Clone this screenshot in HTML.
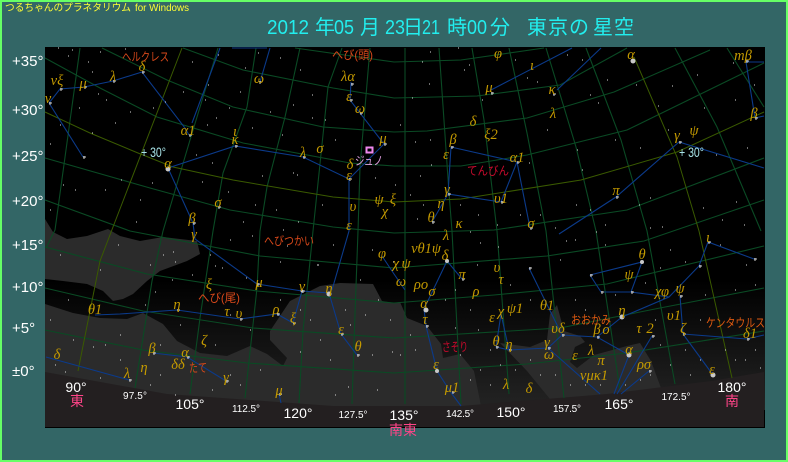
<!DOCTYPE html>
<html lang="ja"><head><meta charset="utf-8"><title>つるちゃんのプラネタリウム</title>
<style>
html,body{margin:0;padding:0;background:#336666;width:788px;height:462px;overflow:hidden}
svg{display:block}
text{font-family:"Liberation Sans","WenQuanYi Zen Hei","Noto Sans CJK JP",sans-serif}
.g text{font-family:"Liberation Serif","DejaVu Serif",serif;font-style:italic;font-size:14.5px;fill:#c49a00;text-anchor:middle}
.n text{font-size:12px;text-anchor:start}
.d text{font-size:15px;fill:#fff}
.az text{fill:#fff;text-anchor:middle}
</style></head><body>
<svg width="788" height="462" viewBox="0 0 788 462" xmlns="http://www.w3.org/2000/svg">
<defs><linearGradient id="sky" x1="0" y1="0" x2="0" y2="1"><stop offset="0" stop-color="#000"/><stop offset=".5" stop-color="#000"/><stop offset="1" stop-color="#242424"/></linearGradient></defs>
<rect width="788" height="462" fill="#336666"/>
<rect x="1" y="1" width="786" height="460" fill="none" stroke="#66ff66" stroke-width="2"/>
<rect x="45" y="47" width="720" height="381" fill="#000"/>
<rect x="45" y="150" width="720" height="260" fill="url(#sky)"/>
<g fill="#2b2b2b">
<polygon points="45,219 53,232 67,239 87,236 108,229 120,236 140,241 163,237 197,241 200,254 187,261 160,271 147,281 133,294 123,299 113,301 103,291 87,284 63,281 45,279"/>
<polygon points="45,304 73,313 100,318 127,319 143,313 163,324 177,341 200,353 227,356 250,346 267,354 283,366 287,358 270,340 270,331 290,301 320,286 340,283 373,284 382,301 394,303 400,302 407,318 427,326 441,344 443,358 460,354 474,371 481,406 45,406"/>
<polygon points="500,343 530,347 547,340 550,314 557,305 564,331 580,336 585,342 575,347 570,362 577,368 594,355 627,346 640,343 651,361 661,388 610,396 554,404 527,371"/>
</g>
<polygon points="45,372 167,394 333,406 461,406 607,394 711,381 764,372 764,427 45,427" fill="#231f20"/>
<g fill="none" stroke="#0a4a24" stroke-width="1.1">
<polyline points="295,48 394,62 461,60 544,48"/>
<polyline points="183,48 243,70 333,88 394,98 477,96 560,85 627,48"/>
<polyline points="102,48 167,80 233,107 323,127 394,132 427,131 527,118 614,92 710,50"/>
<polyline points="45,58 100,88 157,117 243,143 350,163 394,166 461,166 527,155 627,130 764,63"/>
<polyline points="45,158 150,188 230,210 333,227 394,233 494,230 627,210 764,158"/>
<polyline points="45,200 130,231 260,256 394,268 547,256 644,241 764,200"/>
<polyline points="45,247 147,274 257,291 394,303 494,295 607,284 764,246"/>
<polyline points="45,288 143,311 253,328 394,338 560,328 660,308 764,288"/>
<polyline points="45,330 143,350 247,363 394,373 527,364 627,353 764,331"/>
<polyline points="80,48 55,230 46,248"/>
<polyline points="218,48 190,140 163,231 152,281 135,388"/>
<polyline points="256,48 247,107 223,173 213,231 200,318 190,394"/>
<polyline points="300,48 285,117 267,187 260,231 257,288 245,398"/>
<polyline points="342,48 328,87 313,231 303,331 299,403"/>
<polyline points="370,48 360,167 358,231 355,314 352,404"/>
<polyline points="405,48 405,404"/>
<polyline points="439,48 449,193 452,231 461,404"/>
<polyline points="472,48 484,120 497,231 509,394"/>
<polyline points="509,48 527,133 546,231 564,398"/>
<polyline points="546,48 576,147 596,231 620,390"/>
<polyline points="586,48 621,140 647,231 675,384"/>
<polyline points="675,48 717,127 761,231"/>
<polyline points="727,48 764,107"/>
</g>
<g fill="none" stroke="#3a5a00" stroke-width="1">
<polyline points="45,112 90,133 138,153 173,167 233,180 333,197 394,202 461,199 581,180 677,152 764,112"/>
<polyline points="182,48 113,227 100,261 78,371"/>
<polyline points="634,57 677,157 699,231 732,378"/>
</g>
<g fill="none" stroke="#0b3a8a" stroke-width="1.1">
<polyline points="49,103 60,89 84,87 113,81 142,72 185,128 189,135"/>
<polyline points="49,103 83,157"/>
<polyline points="168,168 235,146 303,157 349,179 384,144 360,113 350,100 351,82"/>
<polyline points="349,179 349,231 332,290"/>
<polyline points="168,168 193,223 195,239 257,284 302,291 329,293 341,334 357,355"/>
<polyline points="302,291 293,323 277,314 240,319 177,310 120,314 95,315"/>
<polyline points="220,48 192,123"/><polyline points="270,48 260,82"/><polyline points="232,48 267,48"/>
<polyline points="46,357 129,380"/><polyline points="153,353 187,357 226,381"/><polyline points="279,394 281,403"/>
<polyline points="382,256 394,274 405,290"/>
<polyline points="451,147 517,162 501,202 448,194 451,147"/>
<polyline points="448,194 432,222"/><polyline points="517,162 530,228"/>
<polyline points="491,90 572,48"/><polyline points="557,90 601,48"/>
<polyline points="559,234 616,197 679,142 764,168"/>
<polyline points="746,62 764,62"/><polyline points="746,62 755,118 764,116"/>
<polyline points="447,261 424,309 426,326 437,371 452,394 461,406"/>
<polyline points="447,261 462,279"/>
<polyline points="529,268 562,335 597,337 629,355 614,394"/>
<polyline points="597,337 622,317 669,297 699,266 708,242 754,259"/>
<polyline points="590,275 642,262 631,292 601,292 590,275"/>
<polyline points="631,292 669,297"/>
<polyline points="680,296 683,334 747,339 764,335"/><polyline points="683,334 713,375"/>
<polyline points="652,336 617,394"/><polyline points="649,371 621,394"/>
<polyline points="562,335 548,348 509,350 496,347 501,314 509,350"/>
<polyline points="548,348 600,394"/>
</g>
<path fill="none" stroke="#d8d8d8" stroke-width="1" shape-rendering="crispEdges" d="M58 48h1M72 50h1M88 62h1M68 56h1M100 52h1M125 49h1M92 72h1M98 94h1M79 108h1M106 100h1M60 125h1M50 144h1M92 133h1M115 123h1M130 112h1M153 108h1M165 102h1M183 92h1M205 100h1M207 125h1M216 118h1M229 108h1M240 92h1M208 85h1M192 62h1M218 55h1M245 68h1M258 53h1M280 58h1M300 70h1M312 95h1M293 105h1M270 112h1M252 128h1M282 135h1M312 118h1M325 120h1M335 140h1M297 175h1M293 173h1M262 176h1M228 192h1M255 205h1M276 210h1M136 222h1M75 190h1M63 185h1M50 210h1M105 190h1M121 180h1M140 200h1M152 183h1M196 155h1M212 163h1M202 182h1M243 222h1M283 230h1M298 222h1M322 205h1M375 178h1M395 185h1M410 195h1M420 176h1M431 165h1M430 140h1M415 142h1M400 125h1M412 98h1M429 84h1M422 62h1M430 52h1M458 48h1M469 65h1M464 70h1M482 100h1M515 60h1M527 78h1M537 82h1M567 55h1M582 60h1M590 95h1M607 80h1M598 103h1M636 85h1M672 86h1M658 106h1M697 75h1M704 108h1M668 130h1M640 148h1M615 140h1M577 150h1M582 170h1M547 130h1M529 163h1M576 205h1M540 215h1M555 228h1M520 215h1M497 225h1M478 215h1M470 232h1M417 219h1M423 205h1M460 205h1M639 205h1M650 198h1M703 208h1M736 202h1M716 155h1M747 148h1M735 100h1M754 85h1M733 63h1M722 220h1M744 225h1M662 227h1M605 225h1M590 210h1M650 228h1M596 232h1M566 241h1M498 247h1M480 243h1M477 265h1M393 262h1M372 250h1M333 245h1M318 265h1M287 246h1M252 236h1M230 240h1M215 266h1M192 275h1M175 262h1M163 255h1M173 252h1M150 265h1M118 245h1M100 270h1M60 255h1M68 300h1M50 320h1M73 340h1M93 347h1M120 335h1M160 345h1M180 325h1M215 345h1M230 315h1M145 305h1M155 292h1M172 280h1M210 255h1M222 268h1M246 278h1M280 262h1M317 265h1M360 280h1M378 300h1M365 315h1M390 320h1M372 355h1M377 390h1M392 352h1M330 360h1M320 340h1M310 320h1M300 352h1M260 370h1M240 385h1M212 390h1M150 385h1M100 378h1M65 372h1M55 365h1M410 335h1M415 350h1M400 355h1M460 355h1M470 380h1M480 370h1M490 350h1M455 328h1M470 310h1M478 330h1M455 290h1M445 300h1M510 285h1M530 300h1M560 260h1M575 240h1M605 245h1M575 300h1M585 310h1M615 295h1M645 283h1M660 268h1M685 262h1M670 250h1M720 245h1M735 290h1M755 285h1M746 265h1M705 295h1M700 320h1M725 350h1M755 350h1M760 368h1M745 360h1M735 360h1M700 360h1M685 350h1M670 365h1M660 345h1M655 320h1M540 375h1M530 360h1M515 370h1M500 365h1M490 385h1M600 385h1M585 385h1M570 385h1M555 375h1M625 385h1M640 380h1M650 375h1M690 375h1M250 330h1M230 375h1M175 395h1M160 375h1M120 360h1M105 345h1M348 387h1M335 395h1M280 300h1M300 310h1M345 310h1M350 325h1"/>
<path fill="none" stroke="#cfcfcf" stroke-width="1" shape-rendering="crispEdges" d="M60 89h3M61 88v3M84 87h3M85 86v3M113 81h3M114 80v3M142 72h3M143 71v3M49 103h3M50 102v3M83 157h3M84 156v3M189 135h3M190 134v3M235 146h3M236 145v3M303 157h3M304 156v3M349 179h3M350 178v3M384 144h3M385 143v3M360 113h3M361 112v3M350 100h3M351 99v3M351 84h3M352 83v3M193 223h3M194 222v3M218 207h3M219 206v3M259 82h3M260 81v3M257 284h3M258 283v3M302 291h3M303 290v3M341 334h3M342 333v3M357 355h3M358 354v3M293 323h3M294 322v3M277 314h3M278 313v3M240 319h3M241 318v3M177 310h3M178 309v3M129 380h3M130 379v3M153 353h3M154 352v3M187 357h3M188 356v3M226 381h3M227 380v3M279 394h3M280 393v3M451 147h3M452 146v3M517 162h3M518 161v3M501 202h3M502 201v3M448 194h3M449 193v3M432 222h3M433 221v3M530 228h3M531 227v3M491 93h3M492 92v3M553 94h3M554 93v3M616 197h3M617 196v3M679 142h3M680 141v3M755 118h3M756 117v3M746 61h3M747 60v3M462 279h3M463 278v3M426 326h3M427 325v3M452 392h3M453 391v3M529 268h3M530 267v3M562 335h3M563 334v3M597 337h3M598 336v3M590 275h3M591 274v3M631 292h3M632 291v3M601 292h3M602 291v3M680 296h3M681 295v3M683 334h3M684 333v3M747 339h3M748 338v3M652 336h3M653 335v3M649 371h3M650 370v3M548 348h3M549 347v3M509 350h3M510 349v3M496 347h3M497 346v3M708 242h3M709 241v3M754 259h3M755 258v3M699 266h3M700 265v3"/>
<g fill="#c8c8c8">
<circle cx="168" cy="169" r="2.5"/><circle cx="633" cy="61" r="2.5"/><circle cx="426" cy="310" r="2.5"/><circle cx="622" cy="317" r="2.5"/><circle cx="629" cy="355" r="2.5"/><circle cx="713" cy="375" r="2.5"/><circle cx="437" cy="371" r="2"/><circle cx="447" cy="261" r="2"/><circle cx="642" cy="262" r="2"/><circle cx="329" cy="294" r="2.5"/><circle cx="302" cy="291" r="1.5"/>
</g>
<g class="g">
<text x="142" y="71">δ</text><text x="57" y="85">νξ</text><text x="83" y="88">μ</text><text x="113" y="81">λ</text><text x="259" y="83">ω</text><text x="348" y="81">λα</text><text x="349" y="101">ε</text><text x="360" y="113">ω</text><text x="383" y="143">μ</text><text x="188" y="135">α1</text><text x="235" y="136">ι</text><text x="235" y="144">κ</text><text x="303" y="157">λ</text><text x="320" y="153">σ</text><text x="350" y="169">δ</text><text x="349" y="180">ε</text><text x="168" y="168">α</text><text x="353" y="211">υ</text><text x="379" y="204">ψ</text><text x="393" y="204">ξ</text><text x="385" y="216">χ</text><text x="218" y="207">σ</text><text x="192" y="223">β</text><text x="349" y="230">ε</text><text x="48" y="103">ν</text>
<text x="498" y="58">φ</text><text x="532" y="70">ι</text><text x="489" y="92">μ</text><text x="552" y="94">κ</text><text x="553" y="118">λ</text><text x="473" y="126">δ</text><text x="491" y="139">ξ2</text><text x="453" y="144">β</text><text x="446" y="159">ε</text><text x="517" y="162">α1</text><text x="447" y="194">γ</text><text x="441" y="208">η</text><text x="431" y="222">θ</text><text x="459" y="228">κ</text><text x="501" y="203">υ1</text><text x="531" y="228">σ</text><text x="616" y="195">π</text><text x="631" y="59">α</text><text x="677" y="140">γ</text><text x="694" y="135">ψ</text><text x="743" y="60">mβ</text><text x="754" y="118">β</text>
<text x="194" y="239">γ</text><text x="382" y="258">φ</text><text x="259" y="287">μ</text><text x="302" y="291">ν</text><text x="329" y="293">η</text><text x="209" y="289">ξ</text><text x="95" y="314">θ1</text><text x="177" y="309">η</text><text x="227" y="316">τ</text><text x="239" y="318">υ</text><text x="276" y="314">ρ</text><text x="293" y="323">ξ</text><text x="341" y="334">ε</text><text x="358" y="351">θ</text><text x="204" y="345">ζ</text><text x="57" y="359">δ</text><text x="152" y="353">β</text><text x="185" y="357">α</text><text x="144" y="372">η</text><text x="178" y="369">δδ</text><text x="226" y="382">γ</text><text x="127" y="378">λ</text><text x="279" y="395">μ</text>
<text x="446" y="240">λ</text><text x="426" y="253">νθ1ψ</text><text x="445" y="260">δ</text><text x="396" y="268">χ</text><text x="406" y="268">ψ</text><text x="401" y="286">ω</text><text x="462" y="279">π</text><text x="421" y="289">ρο</text><text x="432" y="296">σ</text><text x="476" y="296">ρ</text><text x="424" y="308">α</text><text x="425" y="324">τ</text><text x="497" y="272">υ</text><text x="501" y="284">τ</text><text x="492" y="322">ε</text><text x="501" y="316">χ</text><text x="515" y="313">ψ1</text><text x="547" y="310">θ1</text><text x="496" y="346">θ</text><text x="509" y="349">η</text><text x="436" y="369">ε</text><text x="452" y="392">μ1</text><text x="506" y="389">λ</text><text x="529" y="393">δ</text><text x="547" y="347">γ</text><text x="549" y="359">ω</text><text x="558" y="333">υδ</text><text x="575" y="360">ε</text><text x="591" y="355">λ</text><text x="601" y="365">π</text><text x="594" y="380">νμκ1</text><text x="597" y="334">β</text><text x="606" y="334">ο</text><text x="622" y="315">η</text><text x="629" y="354">α</text><text x="644" y="369">ρσ</text><text x="629" y="279">ψ</text><text x="642" y="259">θ</text><text x="639" y="333">τ</text><text x="650" y="333">2</text><text x="662" y="296">χφ</text><text x="680" y="293">ψ</text><text x="674" y="320">υ1</text><text x="683" y="333">ζ</text><text x="712" y="374">ε</text><text x="708" y="242">ι</text><text x="750" y="338">δ1</text>
</g>
<g class="n">
<text x="122" y="61" fill="#d8481a" textLength="47" lengthAdjust="spacingAndGlyphs">ヘルクレス</text>
<text x="332" y="59" fill="#d8481a" textLength="41" lengthAdjust="spacingAndGlyphs">へび(頭)</text>
<text x="264" y="245" fill="#d8481a" textLength="50" lengthAdjust="spacingAndGlyphs">へびつかい</text>
<text x="198" y="302" fill="#d8481a" textLength="42" lengthAdjust="spacingAndGlyphs">へび(尾)</text>
<text x="189" y="372" fill="#d8481a" textLength="18" lengthAdjust="spacingAndGlyphs">たて</text>
<text x="571" y="324" fill="#e05a10" textLength="40" lengthAdjust="spacingAndGlyphs">おおかみ</text>
<text x="442" y="351" fill="#c80a2c" textLength="26" lengthAdjust="spacingAndGlyphs">さそり</text>
<text x="467" y="175" fill="#c80a2c" textLength="42" lengthAdjust="spacingAndGlyphs">てんびん</text>
<text x="706" y="327" fill="#e05a10" textLength="59" lengthAdjust="spacingAndGlyphs">ケンタウルス</text>
<text x="355" y="165" fill="#e0a0e0" textLength="28" lengthAdjust="spacingAndGlyphs">ジュノ</text>
</g>
<rect x="366.500" y="147.500" width="6" height="5" fill="none" stroke="#ee88ee" stroke-width="2"/>
<text x="141" y="157" font-size="14" fill="#a8e4e8" textLength="25" lengthAdjust="spacingAndGlyphs">+ 30°</text>
<text x="679" y="157" font-size="14" fill="#a8e4e8" textLength="25" lengthAdjust="spacingAndGlyphs">+ 30°</text>
<text x="5" y="11" font-size="10" fill="#ffff33" textLength="126" lengthAdjust="spacingAndGlyphs">つるちゃんのプラネタリウム</text>
<text x="135" y="11" font-size="10" fill="#ffff33" textLength="54" lengthAdjust="spacingAndGlyphs">for Windows</text>
<g font-size="20" fill="#22eeee">
<text x="267" y="34" textLength="42" lengthAdjust="spacingAndGlyphs">2012</text>
<text x="315" y="34">年</text><text x="334" y="34" textLength="20" lengthAdjust="spacingAndGlyphs">05</text>
<text x="360" y="34">月</text><text x="385" y="34" textLength="20" lengthAdjust="spacingAndGlyphs">23</text>
<text x="403" y="34">日</text><text x="422" y="34" textLength="18" lengthAdjust="spacingAndGlyphs">21</text>
<text x="447" y="34">時</text><text x="467" y="34" textLength="20" lengthAdjust="spacingAndGlyphs">00</text>
<text x="490" y="34">分</text><text x="527" y="34">東</text>
<text x="548" y="34">京</text><text x="569" y="34">の</text>
<text x="593" y="34">星</text><text x="614" y="34">空</text>
</g>
<g class="d">
<text x="12" y="66">+35°</text><text x="12" y="115">+30°</text><text x="12" y="161">+25°</text><text x="12" y="206">+20°</text><text x="12" y="250">+15°</text><text x="12" y="292">+10°</text><text x="12" y="333">+5°</text><text x="12" y="376">±0°</text>
</g>
<g class="az">
<text x="76" y="392" font-size="14">90°</text>
<text x="135" y="399" font-size="10" textLength="24" lengthAdjust="spacing">97.5°</text>
<text x="190" y="409" font-size="14">105°</text>
<text x="246" y="412" font-size="10" textLength="28" lengthAdjust="spacing">112.5°</text>
<text x="298" y="418" font-size="14">120°</text>
<text x="353" y="418" font-size="10" textLength="29" lengthAdjust="spacing">127.5°</text>
<text x="404" y="420" font-size="14">135°</text>
<text x="460" y="417" font-size="10" textLength="28" lengthAdjust="spacing">142.5°</text>
<text x="511" y="417" font-size="14">150°</text>
<text x="567" y="412" font-size="10" textLength="28" lengthAdjust="spacing">157.5°</text>
<text x="619" y="409" font-size="14">165°</text>
<text x="676" y="400" font-size="10" textLength="29" lengthAdjust="spacing">172.5°</text>
<text x="732" y="392" font-size="14">180°</text>
</g>
<g font-size="14" fill="#ff4488" text-anchor="middle">
<text x="77" y="406">東</text><text x="403" y="435">南東</text><text x="732" y="406">南</text>
</g>
</svg>
</body></html>
